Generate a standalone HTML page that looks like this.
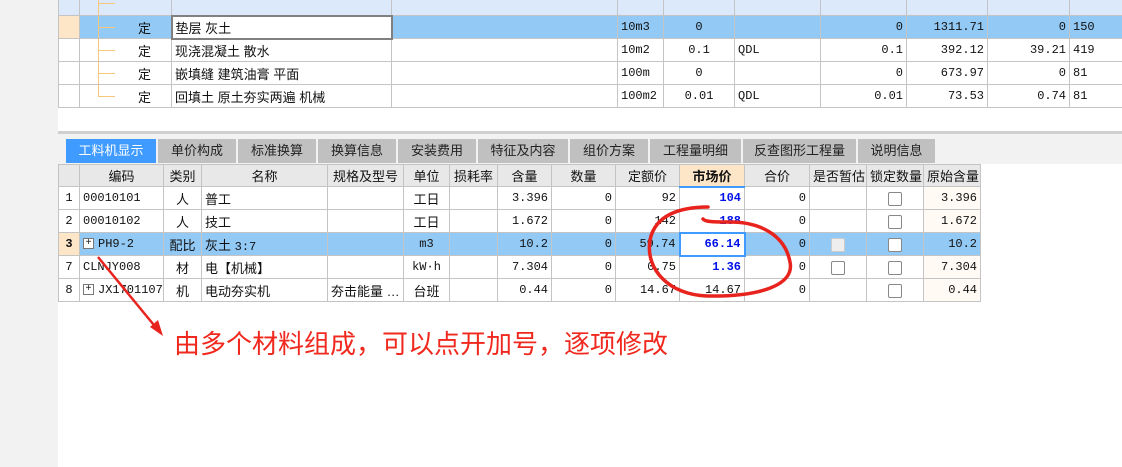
<!DOCTYPE html>
<html><head><meta charset="utf-8"><style>
*{margin:0;padding:0;box-sizing:border-box}
body{width:1122px;height:467px;overflow:hidden;background:#fff;position:relative;font-family:"Liberation Sans","Noto Sans CJK SC",sans-serif;font-size:13px;color:#111}
.l{position:absolute;left:0;top:0;width:58px;height:467px;background:#f2f2f2}
table{position:absolute;border-collapse:collapse;table-layout:fixed}
td{border:1px solid #c4c4c4;height:23px;padding:0 3px;white-space:nowrap;overflow:hidden;font-size:13px}
.m{font-family:"Liberation Mono","Noto Sans CJK SC",monospace;font-size:12px}
.r{text-align:right}.c{text-align:center}
.sel td{background:#93c9f5}
.hd td{background:#e8e8e8;text-align:center;height:22px}
.tree{position:relative;padding-left:58px}
.tree:before{content:"";position:absolute;left:18px;top:-1px;bottom:-1px;border-left:1px solid #f6c77a}
.tree.last:before{bottom:11px}
.tree:after{content:"";position:absolute;left:18px;top:11px;width:17px;border-top:1px solid #f6c77a}
.tab{position:absolute;top:139px;height:24px;background:#c0c0c0;text-align:center;line-height:24px;font-size:13px;color:#222}
.cb{display:inline-block;width:14px;height:14px;border:1px solid #888;border-radius:2px;background:#fff;vertical-align:middle}
.pl{display:inline-block;width:11px;height:11px;border:1px solid #777;font-size:10px;line-height:9px;text-align:center;margin-right:4px;vertical-align:middle;background:#fff}
.b{color:#0010e8;font-weight:bold}
.o{background:#fffaf3}
</style></head><body>
<div class="l"></div>
<table style="left:58px;top:-9px;width:1100px">
<colgroup><col style="width:21px"><col style="width:92px"><col style="width:220px"><col style="width:226px"><col style="width:46px"><col style="width:71px"><col style="width:86px"><col style="width:86px"><col style="width:81px"><col style="width:82px"><col style="width:109px"></colgroup>
<tr style="background:#dce9fb"><td style="height:24px"></td><td class="tree" style="height:24px"></td><td></td><td></td><td></td><td></td><td></td><td></td><td></td><td></td><td></td></tr>
<tr class="sel"><td style="background:#fde6c8"></td><td class="tree">定</td><td style="background:#fff;border:2px solid #808080">垫层 灰土</td><td></td><td class="m">10m3</td><td class="m c">0</td><td></td><td class="m r">0</td><td class="m r">1311.71</td><td class="m r">0</td><td class="m">150</td></tr>
<tr><td></td><td class="tree">定</td><td>现浇混凝土 散水</td><td></td><td class="m">10m2</td><td class="m c">0.1</td><td class="m">QDL</td><td class="m r">0.1</td><td class="m r">392.12</td><td class="m r">39.21</td><td class="m">419</td></tr>
<tr><td></td><td class="tree">定</td><td>嵌填缝 建筑油膏 平面</td><td></td><td class="m">100m</td><td class="m c">0</td><td></td><td class="m r">0</td><td class="m r">673.97</td><td class="m r">0</td><td class="m">81</td></tr>
<tr><td></td><td class="tree last">定</td><td>回填土 原土夯实两遍 机械</td><td></td><td class="m">100m2</td><td class="m c">0.01</td><td class="m">QDL</td><td class="m r">0.01</td><td class="m r">73.53</td><td class="m r">0.74</td><td class="m">81</td></tr>
</table>
<div style="position:absolute;left:58px;top:131px;width:1064px;height:3px;background:#d0d0d0"></div>
<div style="position:absolute;left:58px;top:134px;width:1064px;height:30px;background:#f2f2f2"></div>
<div class="tab" style="left:66px;width:90px;background:#3f9bff;color:#fff">工料机显示</div>
<div class="tab" style="left:158px;width:78px">单价构成</div>
<div class="tab" style="left:238px;width:78px">标准换算</div>
<div class="tab" style="left:318px;width:78px">换算信息</div>
<div class="tab" style="left:398px;width:78px">安装费用</div>
<div class="tab" style="left:478px;width:90px">特征及内容</div>
<div class="tab" style="left:570px;width:78px">组价方案</div>
<div class="tab" style="left:650px;width:91px">工程量明细</div>
<div class="tab" style="left:743px;width:113px">反查图形工程量</div>
<div class="tab" style="left:858px;width:77px">说明信息</div>
<table style="left:58px;top:164px;width:922px">
<colgroup><col style="width:21px"><col style="width:84px"><col style="width:38px"><col style="width:126px"><col style="width:76px"><col style="width:46px"><col style="width:48px"><col style="width:54px"><col style="width:64px"><col style="width:64px"><col style="width:65px"><col style="width:65px"><col style="width:57px"><col style="width:57px"><col style="width:57px"></colgroup>
<tr class="hd"><td></td><td>编码</td><td>类别</td><td>名称</td><td>规格及型号</td><td>单位</td><td>损耗率</td><td>含量</td><td>数量</td><td>定额价</td><td style="background:#fde6c8;font-weight:bold;border-bottom:2px solid #3f9bff">市场价</td><td>合价</td><td>是否暂估</td><td>锁定数量</td><td>原始含量</td></tr>
<tr><td class="m c">1</td><td class="m">00010101</td><td class="c">人</td><td>普工</td><td></td><td class="c">工日</td><td></td><td class="m r">3.396</td><td class="m r">0</td><td class="m r">92</td><td class="m r b">104</td><td class="m r">0</td><td></td><td class="c"><span class="cb"></span></td><td class="m r o">3.396</td></tr>
<tr><td class="m c">2</td><td class="m">00010102</td><td class="c">人</td><td>技工</td><td></td><td class="c">工日</td><td></td><td class="m r">1.672</td><td class="m r">0</td><td class="m r">142</td><td class="m r b">188</td><td class="m r">0</td><td></td><td class="c"><span class="cb"></span></td><td class="m r o">1.672</td></tr>
<tr class="sel"><td class="m c" style="background:#fde6c8;font-weight:bold">3</td><td class="m"><span class="pl">+</span>PH9-2</td><td class="c">配比</td><td>灰土 <span class="m">3:7</span></td><td></td><td class="m c">m3</td><td></td><td class="m r">10.2</td><td class="m r">0</td><td class="m r">59.74</td><td class="m r b" style="background:#fff;border:2px solid #3f9bff">66.14</td><td class="m r">0</td><td class="c"><span class="cb" style="background:#eee;border-color:#ccc"></span></td><td class="c"><span class="cb"></span></td><td class="m r">10.2</td></tr>
<tr><td class="m c">7</td><td class="m">CLNJY008</td><td class="c">材</td><td>电【机械】</td><td></td><td class="m c">kW·h</td><td></td><td class="m r">7.304</td><td class="m r">0</td><td class="m r">0.75</td><td class="m r b">1.36</td><td class="m r">0</td><td class="c"><span class="cb"></span></td><td class="c"><span class="cb"></span></td><td class="m r o">7.304</td></tr>
<tr><td class="m c">8</td><td class="m"><span class="pl">+</span>JX17011070</td><td class="c">机</td><td>电动夯实机</td><td>夯击能量 …</td><td class="c">台班</td><td></td><td class="m r">0.44</td><td class="m r">0</td><td class="m r">14.67</td><td class="m r">14.67</td><td class="m r">0</td><td></td><td class="c"><span class="cb"></span></td><td class="m r o">0.44</td></tr>
</table>
<svg style="position:absolute;left:0;top:0" width="1122" height="467">
<line x1="98" y1="257" x2="158" y2="330" stroke="#e8231e" stroke-width="2.5"/>
<polygon points="163,336 150,327 158,320" fill="#e8231e"/>
<path d="M708,207 C680,207 655,215 650,240 C645,270 670,295 707,296 C760,297 795,285 790,262 C785,235 760,222 730,222 C715,222 705,222 703,219" fill="none" stroke="#e8231e" stroke-width="3.5" stroke-linecap="round"/>
</svg>
<div style="position:absolute;left:174px;top:326px;font-size:26px;color:#f0281e;font-family:'Noto Sans CJK SC',sans-serif;line-height:34px;white-space:nowrap">由多个材料组成，可以点开加号，逐项修改</div>
</body></html>
